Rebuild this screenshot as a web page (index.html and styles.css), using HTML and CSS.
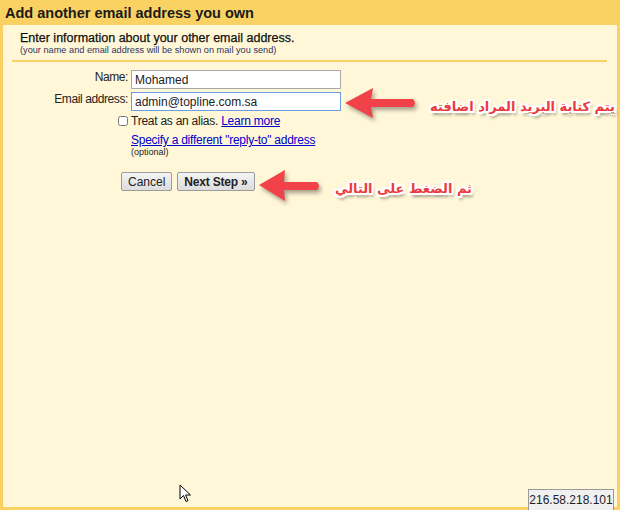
FILE: index.html
```html
<!DOCTYPE html>
<html lang="en">
<head>
    <meta charset="UTF-8">
    <title>Add another email address you own</title>
    <link rel="stylesheet" href="styles.css">
</head>
<body>
    <div class="dialog">
        <div class="dialog-title">Add another email address you own</div>
        <div class="dialog-body">
            <div class="intro">
                <div class="intro-title">Enter information about your other email address.</div>
                <div class="intro-note">(your name and email address will be shown on mail you send)</div>
            </div>
            <div class="rule"></div>

            <div class="form">
                <label class="label" for="name">Name:</label>
                <div class="field"><input id="name" class="text-input" type="text" value="Mohamed"></div>

                <label class="label" for="email">Email address:</label>
                <div class="field"><input id="email" class="text-input focused" type="text" value="admin@topline.com.sa"></div>

                <div class="label"><input type="checkbox" class="check"></div>
                <div class="field alias">Treat as an alias. <a href="#">Learn more</a></div>

                <div class="label"></div>
                <div class="field">
                    <a href="#">Specify a different "reply-to" address</a>
                    <div class="optional">(optional)</div>
                </div>
            </div>

            <div class="buttons">
                <button class="btn">Cancel</button>
                <button class="btn btn-next">Next Step &raquo;</button>
            </div>
        </div>

        <!-- annotations drawn over the screenshot -->
        <svg class="arrow arrow-email" width="80" height="40" viewBox="0 0 80 40">
            <path d="M2 18 L30 3 L28 14 L70 14 Q74 18 70 22 L28 22 L30 33 Z" fill="#f04248"/>
        </svg>
        <div class="note note-email" dir="rtl">يتم كتابة البريد المراد اضافته</div>

        <svg class="arrow arrow-next" width="70" height="40" viewBox="0 0 70 40">
            <path d="M2 18 L28 3 L27 15 L60 15 Q64 19 60 23 L27 23 L28 34 Z" fill="#f04248"/>
        </svg>
        <div class="note note-next" dir="rtl">ثم الضغط على التالي</div>

        <svg class="cursor" width="14" height="20" viewBox="0 0 14 20">
            <path d="M1 1 L1 15 L4.5 11.5 L7 17.5 L9 16.6 L6.6 11 L11.5 11 Z" fill="#fff" stroke="#000" stroke-width="1"/>
        </svg>
    </div>
    <div class="ip-tip">216.58.218.101</div>
</body>
</html>
```

FILE: styles.css
```css
body {
    margin: 0;
    padding: 0;
    background-color: #ffffff;
    font-family: "Liberation Sans", Arial, sans-serif;
    color: #222222;
    position: relative;
    width: 633px;
    height: 510px;
    overflow: hidden;
}
.dialog {
    position: relative;
    width: 620px;
    height: 510px;
    box-sizing: border-box;
    background-color: #fad163;
    padding: 0 3px 3px 3px;
    display: flex;
    flex-direction: column;
}
.dialog-title {
    height: 25px;
    line-height: 27px;
    padding-left: 2px;
    font-size: 14.5px;
    font-weight: bold;
    color: #1a1a1a;
}
.dialog-body {
    flex: 1;
    background-color: #fff7d7;
    padding-top: 6px;
}
.intro {
    padding-left: 17px;
}
.intro-title {
    font-size: 12.5px;
    line-height: 14px;
    color: #111111;
    -webkit-text-stroke: 0.25px #111111;
}
.intro-note {
    font-size: 9.2px;
    line-height: 10px;
    color: #33335a;
}
.rule {
    height: 2px;
    background-color: #fad163;
    margin: 5px 10px 0 9px;
}
.form {
    display: grid;
    grid-template-columns: 125px auto;
    column-gap: 3px;
    row-gap: 3px;
    margin-top: 8px;
    font-size: 12px;
}
.label {
    text-align: right;
    line-height: 15px;
    letter-spacing: -0.4px;
}
.field {
    line-height: 15px;
    letter-spacing: -0.25px;
}
.text-input {
    width: 210px;
    height: 19px;
    box-sizing: border-box;
    border: 1px solid #a9a9a9;
    background-color: #ffffff;
    padding: 0 0 0 3px;
    font-family: "Liberation Sans", Arial, sans-serif;
    font-size: 12px;
    color: #222222;
    display: block;
}
.text-input.focused {
    border-color: #6c9be0;
    outline: none;
}
.check {
    margin: 2px 0 0 0;
    width: 10px;
    height: 10px;
}
a {
    color: #0000cc;
    text-decoration: underline;
}
.optional {
    font-size: 9px;
    line-height: 8px;
    letter-spacing: 0;
}
.buttons {
    display: flex;
    gap: 5px;
    margin: 16px 0 0 118px;
}
.btn {
    height: 19px;
    padding: 0 6px;
    border: 1px solid #9c9c9c;
    border-radius: 2px;
    background: linear-gradient(#f4f4f4, #dddddd);
    font-family: "Liberation Sans", Arial, sans-serif;
    font-size: 12px;
    color: #222222;
}
.btn-next {
    font-weight: bold;
    padding: 0 6px;
    letter-spacing: -0.2px;
}
.arrow {
    position: absolute;
    filter: drop-shadow(2px 3px 2px rgba(0, 0, 0, 0.35));
}
.arrow-email {
    left: 343px;
    top: 85px;
}
.arrow-next {
    left: 257px;
    top: 167px;
}
.note {
    position: absolute;
    font-family: "DejaVu Sans", sans-serif;
    font-weight: bold;
    color: #ec3b40;
    text-shadow:
        -2px 0 0 #fff, 2px 0 0 #fff, 0 -2px 0 #fff, 0 2px 0 #fff,
        -2px -2px 0 #fff, 2px 2px 0 #fff, -2px 2px 0 #fff, 2px -2px 0 #fff,
        2px 4px 3px rgba(0, 0, 0, 0.4);
    white-space: nowrap;
}
.note-email {
    left: 430px;
    top: 99px;
    font-size: 13px;
}
.note-next {
    left: 335px;
    top: 181px;
    font-size: 13px;
}
.cursor {
    position: absolute;
    left: 179px;
    top: 484px;
}
.ip-tip {
    position: absolute;
    left: 528px;
    top: 489px;
    width: 86px;
    height: 21px;
    box-sizing: border-box;
    border: 1px solid #999999;
    border-bottom: none;
    background-color: #f0f0f0;
    font-size: 12px;
    line-height: 20px;
    text-align: center;
    color: #222222;
}
```
